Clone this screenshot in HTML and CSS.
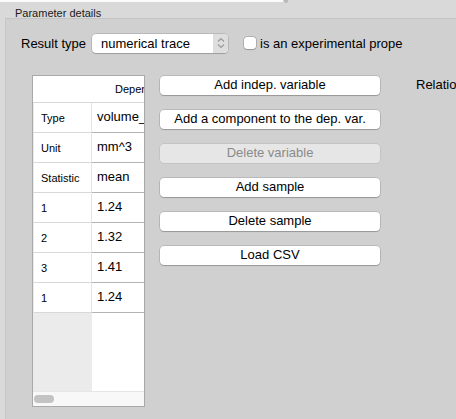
FILE: index.html
```html
<!DOCTYPE html>
<html>
<head>
<meta charset="utf-8">
<link rel="stylesheet" href="styles.css">
</head>
<body>
<div class="topbar"><div class="topline"></div><div class="topmark"></div></div>
<div class="title">Parameter details</div>
<div class="panel">
  <div class="result-row">
    <span class="label">Result type</span>
    <div class="select">
      <span class="select-text">numerical trace</span>
      <span class="stepper">
        <svg width="8" height="12" viewBox="0 0 8 12"><path d="M1 4.5 L4 1.5 L7 4.5 M1 7.5 L4 10.5 L7 7.5" fill="none" stroke="#9a9a9a" stroke-width="1.2"/></svg>
      </span>
    </div>
    <span class="checkbox"></span>
    <span class="check-label">is an experimental prope</span>
  </div>
  <div class="body-row">
    <div class="table">
      <div class="thead">Dependent variable</div>
      <div class="trow"><div class="c1">Type</div><div class="c2">volume_</div></div>
      <div class="trow"><div class="c1">Unit</div><div class="c2">mm^3</div></div>
      <div class="trow"><div class="c1">Statistic</div><div class="c2">mean</div></div>
      <div class="trow"><div class="c1">1</div><div class="c2">1.24</div></div>
      <div class="trow"><div class="c1">2</div><div class="c2">1.32</div></div>
      <div class="trow"><div class="c1">3</div><div class="c2">1.41</div></div>
      <div class="trow"><div class="c1">1</div><div class="c2">1.24</div></div>
      <div class="filler"><div class="f1"></div><div class="f2"></div></div>
      <div class="hscroll"><div class="thumb"></div></div>
    </div>
    <div class="buttons">
      <div class="btn">Add indep. variable</div>
      <div class="btn">Add a component to the dep. var.</div>
      <div class="btn disabled">Delete variable</div>
      <div class="btn">Add sample</div>
      <div class="btn">Delete sample</div>
      <div class="btn">Load CSV</div>
    </div>
    <div class="relation">Relation</div>
  </div>
</div>
</body>
</html>
```
FILE: styles.css
```css
html, body {
  margin: 0;
  padding: 0;
}
body {
  width: 456px;
  height: 419px;
  overflow: hidden;
  background: #d9d9d9;
  font-family: "Liberation Sans", Arial, sans-serif;
  color: #000;
}
.topbar {
  height: 2px;
  display: flex;
}
.topline {
  width: 283px;
  height: 2px;
  background: #fbfbfb;
}
.topmark {
  width: 4px;
  height: 3px;
  margin-left: 1px;
  background: #b9b9b9;
  border-radius: 0 0 2px 2px;
}
.title {
  height: 16px;
  box-sizing: border-box;
  padding: 6px 0 0 15px;
  font-size: 11px;
  line-height: 11px;
  color: #1a1a1a;
  white-space: nowrap;
}
.panel {
  margin-left: 5px;
  height: 401px;
  box-sizing: border-box;
  background: #d0d0d0;
  border-top: 1px solid #c3c3c3;
  border-left: 1px solid #c6c6c6;
}
.result-row {
  display: flex;
  align-items: center;
  height: 20px;
  margin-top: 14px;
  padding-left: 15px;
  font-size: 13px;
  white-space: nowrap;
}
.label {
  margin-right: 6px;
}
.select {
  width: 136px;
  height: 19px;
  box-sizing: border-box;
  display: flex;
  background: #fff;
  border-radius: 4px;
  box-shadow: 0 0 0 0.5px rgba(0,0,0,0.22), 0 1px 1px rgba(0,0,0,0.15);
  overflow: hidden;
}
.select-text {
  flex: 1;
  padding-left: 9px;
  line-height: 19px;
}
.stepper {
  width: 15px;
  background: #dedede;
  display: flex;
  align-items: center;
  justify-content: center;
}
.checkbox {
  width: 12px;
  height: 12px;
  margin-left: 16px;
  background: #fff;
  border-radius: 3px;
  box-shadow: 0 0 0 0.5px rgba(0,0,0,0.3), 0 1px 1px rgba(0,0,0,0.15);
}
.check-label {
  margin-left: 4px;
}
.body-row {
  display: flex;
  align-items: flex-start;
  margin-top: 22px;
  padding-left: 26px;
  white-space: nowrap;
}
.table {
  width: 113px;
  height: 332px;
  box-sizing: border-box;
  border: 1px solid #a9a9a9;
  background: #fff;
  display: flex;
  flex-direction: column;
  overflow: hidden;
  flex: none;
}
.thead {
  height: 27px;
  flex: none;
  box-sizing: border-box;
  border-bottom: 1px solid #d6d6d6;
  padding-left: 82px;
  font-size: 11px;
  line-height: 26px;
}
.trow {
  height: 30px;
  flex: none;
  display: flex;
}
.c1 {
  width: 59px;
  flex: none;
  box-sizing: border-box;
  border-left: 1px solid #ececec;
  border-right: 1px solid #e4e4e4;
  border-bottom: 1px solid #d8d8d8;
  padding-left: 7px;
  font-size: 11px;
  line-height: 30px;
}
.c2 {
  flex: 1;
  box-sizing: border-box;
  border-bottom: 1px solid #b4b4b4;
  padding-left: 5px;
  font-size: 13px;
  line-height: 28px;
  overflow: hidden;
}
.filler {
  flex: 1;
  display: flex;
}
.f1 {
  width: 59px;
  background: #ebebeb;
  border-right: 1px solid #ebebeb;
  box-sizing: border-box;
}
.f2 {
  flex: 1;
  background: #fff;
}
.hscroll {
  height: 15px;
  flex: none;
  box-sizing: border-box;
  background: #f8f8f8;
  border-top: 1px solid #e6e6e6;
  padding: 3px 0 0 1px;
}
.thumb {
  width: 20px;
  height: 8px;
  border-radius: 4px;
  background: #c3c3c3;
}
.buttons {
  display: flex;
  flex-direction: column;
  gap: 15px;
  margin-top: 1px;
  margin-left: 15px;
  flex: none;
}
.btn {
  width: 220px;
  height: 19px;
  box-sizing: border-box;
  background: #fff;
  border-radius: 4px;
  box-shadow: 0 0 0 0.5px rgba(0,0,0,0.22), 0 1px 1px rgba(0,0,0,0.18);
  font-size: 13px;
  line-height: 18px;
  text-align: center;
}
.btn.disabled {
  background: #e6e6e6;
  color: #8a8a8a;
  box-shadow: 0 0 0 0.5px rgba(0,0,0,0.12);
}
.relation {
  margin-left: 36px;
  margin-top: 1px;
  font-size: 13px;
  line-height: 18px;
}
```
